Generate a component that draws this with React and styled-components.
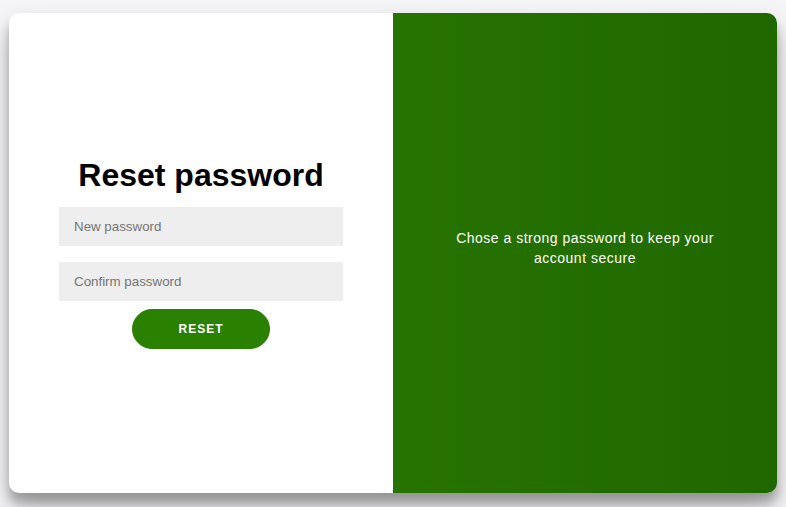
import React from "react";
import styled, { createGlobalStyle } from "styled-components";

const GlobalStyle = createGlobalStyle`
  * {
    box-sizing: border-box;
  }
  body {
    margin: 0;
    background: #f6f5f7;
    font-family: "Liberation Sans", Arial, sans-serif;
  }
`;

export default function App() {
  return (
    <>
      <GlobalStyle />
      <Page>
        <Container>
          <FormPanel>
            <Title>Reset password</Title>
            <Input type="password" placeholder="New password" />
            <Input type="password" placeholder="Confirm password" />
            <Button>Reset</Button>
          </FormPanel>
          <Overlay>
            <Text>Chose a strong password to keep your account secure</Text>
          </Overlay>
        </Container>
      </Page>
    </>
  );
}

const Page = styled.div`
  display: flex;
  align-items: center;
  justify-content: center;
  height: 100vh;
  padding-bottom: 1px;
`;
const Container = styled.div`
  display: grid;
  grid-template-columns: 1fr 1fr;
  width: 768px;
  min-height: 480px;
  background: #fff;
  border-radius: 10px;
  overflow: hidden;
  box-shadow: 0 14px 28px rgba(0, 0, 0, 0.25), 0 10px 10px rgba(0, 0, 0, 0.22);
`;
const FormPanel = styled.form`
  display: flex;
  flex-direction: column;
  align-items: center;
  justify-content: center;
  padding: 0 50px;
  text-align: center;
`;
const Title = styled.h1`
  margin: 0 0 5px;
  font-size: 32px;
  font-weight: bold;
  color: #000;
`;
const Input = styled.input`
  width: 100%;
  margin: 8px 0;
  padding: 12px 15px;
  border: none;
  background: #eee;
  font-family: "Liberation Sans", Arial, sans-serif;
  font-size: 13.333px;
  outline: none;
  &::placeholder {
    color: #757575;
  }
`;
const Button = styled.button`
  border-radius: 20px;
  border: 1px solid #2a8000;
  background: #2a8000;
  color: #fff;
  font-family: "Liberation Sans", Arial, sans-serif;
  font-size: 12px;
  font-weight: bold;
  padding: 12px 45px;
  letter-spacing: 1px;
  text-transform: uppercase;
`;
const Overlay = styled.div`
  display: flex;
  align-items: center;
  justify-content: center;
  padding: 0 40px;
  text-align: center;
  background: linear-gradient(to right, #277300, #1f6800);
`;
const Text = styled.p`
  margin: 20px 0 30px;
  font-size: 14px;
  line-height: 20px;
  letter-spacing: 0.5px;
  color: #fff;
`;
